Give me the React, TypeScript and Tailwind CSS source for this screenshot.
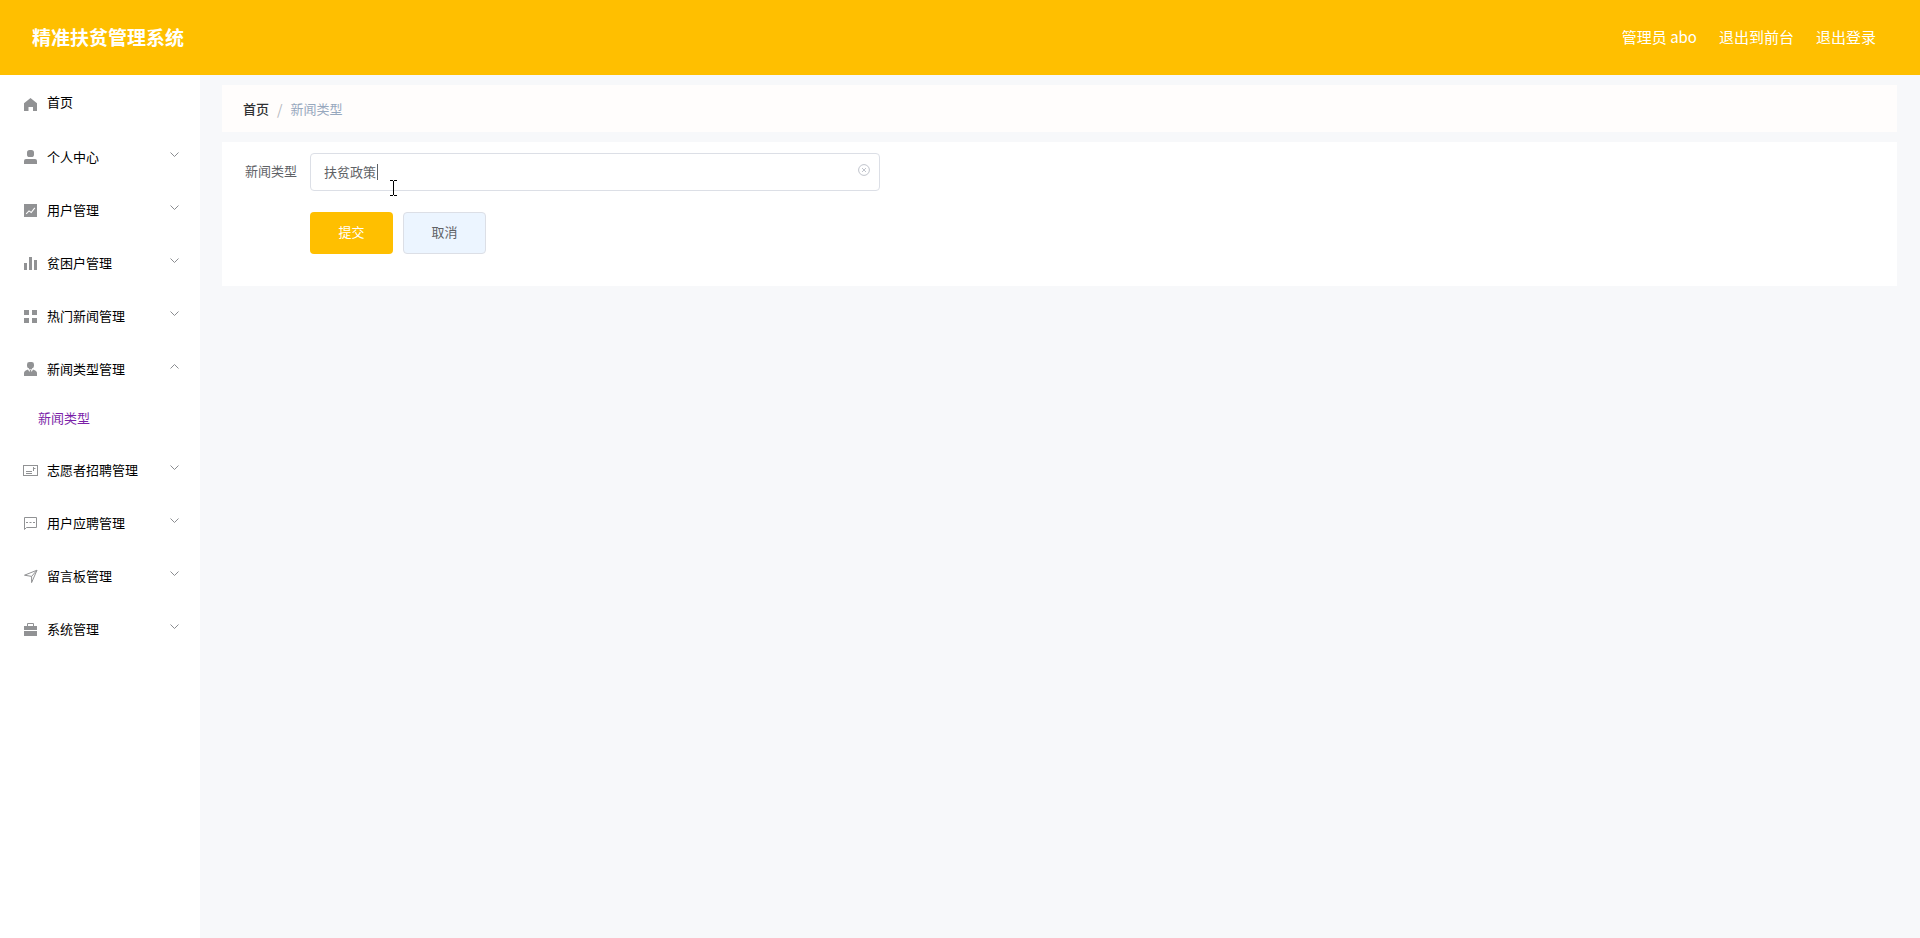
import React, { useState } from 'react';

type IconName =
  | 'home' | 'user' | 'marketing' | 'data' | 'grid' | 'custom'
  | 'postcard' | 'chat' | 'position' | 'cooperation';

interface MenuItem {
  label: string;
  icon: IconName;
  children?: string[];
}

const MENU: MenuItem[] = [
  { label: '个人中心', icon: 'user', children: [] },
  { label: '用户管理', icon: 'marketing', children: [] },
  { label: '贫困户管理', icon: 'data', children: [] },
  { label: '热门新闻管理', icon: 'grid', children: [] },
  { label: '新闻类型管理', icon: 'custom', children: ['新闻类型'] },
  { label: '志愿者招聘管理', icon: 'postcard', children: [] },
  { label: '用户应聘管理', icon: 'chat', children: [] },
  { label: '留言板管理', icon: 'position', children: [] },
  { label: '系统管理', icon: 'cooperation', children: [] },
];

const SHAPES: Record<IconName, React.ReactNode> = {
  home: <path fill="currentColor" d="M7.5 1 14 6.2V14H10V10H5.5V14H1V6.2z" />,
  user: (
    <g fill="currentColor">
      <rect x="4" y="0" width="7" height="7" rx="2.6" />
      <path d="M1 14v-3.2Q1 9 3 9h9q2 0 2 1.8V14z" />
    </g>
  ),
  marketing: (
    <g>
      <rect x="1" y="1" width="13" height="13" fill="currentColor" />
      <path d="M3.2 10.8 6 7.9l2.2 1.6L11.8 4.8" fill="none" stroke="#fff" strokeWidth="1.1" />
    </g>
  ),
  data: (
    <g fill="currentColor">
      <rect x="1" y="7" width="3" height="7" />
      <rect x="6" y="1" width="3" height="13" />
      <rect x="11" y="4" width="3" height="10" />
    </g>
  ),
  grid: (
    <g fill="currentColor">
      <rect x="1" y="1" width="5" height="5" />
      <rect x="9" y="1" width="5" height="5" />
      <rect x="1" y="9" width="5" height="5" />
      <rect x="9" y="9" width="5" height="5" />
    </g>
  ),
  custom: (
    <g fill="currentColor">
      <rect x="4" y="0" width="7" height="6.4" rx="2.4" />
      <path d="M1 14v-3Q1 8.6 5 7.4L6.4 10 7 8h1l.6 2L10 7.4q4 1.2 4 3.6v3z" />
      <path d="M6 5h3v2.4H6z" />
    </g>
  ),
  postcard: (
    <g fill="none" stroke="currentColor">
      <rect x=".5" y="2.5" width="14" height="10" />
      <path d="M3 8.5h6M3 10.5h6M10.5 4v4M10.5 5.5h2" />
    </g>
  ),
  chat: (
    <g fill="none" stroke="currentColor">
      <path d="M1.5 13.5v-12h12v10h-10z" />
      <path d="M3 6.5h2M6.5 6.5h2M10 6.5h2" />
    </g>
  ),
  position: (
    <path d="M1.5 6.2 14 1.2 8.6 13.6V7.4z M8.6 7.4 13.6 1.6" fill="none" stroke="currentColor" />
  ),
  cooperation: (
    <g>
      <path d="M4.5 4V1.5h6V4" fill="none" stroke="currentColor" />
      <path d="M1 4h13v4H1zM1 9h13v5H1z" fill="currentColor" />
    </g>
  ),
};

function Icon({ name }: { name: IconName }) {
  return (
    <svg viewBox="0 0 15 15" className="w-[15px] h-[15px] shrink-0 text-[#919294]" aria-hidden="true">
      {SHAPES[name]}
    </svg>
  );
}

function Chevron({ open }: { open: boolean }) {
  return (
    <svg viewBox="0 0 9 5" className="w-[9px] h-[5px] ml-auto mb-1.5 shrink-0" aria-hidden="true">
      <path d={open ? 'M.5 4.5l4-4 4 4' : 'M.5.5l4 4 4-4'} fill="none" stroke="#8a8c90" />
    </svg>
  );
}

function Header() {
  return (
    <header className="h-[75px] shrink-0 flex items-center justify-between pl-8 pr-11 bg-[#ffbf00] text-white">
      <h1 className="text-[19px] font-bold">精准扶贫管理系统</h1>
      <nav className="flex items-center gap-[22px] text-[15px]">
        <span>管理员 abo</span>
        <a href="#front">退出到前台</a>
        <a href="#logout">退出登录</a>
      </nav>
    </header>
  );
}

function Sidebar() {
  const [opened, setOpened] = useState('新闻类型管理');

  return (
    <aside className="w-[200px] shrink-0 bg-white pt-0.5 text-[13px] text-black">
      <a href="#home" className="flex items-center gap-[9px] h-[54px] pl-[23px] pr-5">
        <Icon name="home" />
        <span className="pb-1">首页</span>
      </a>
      {MENU.map((item) => {
        const open = opened === item.label;
        return (
          <div key={item.label}>
            <button
              type="button"
              aria-expanded={open}
              onClick={() => setOpened(open ? '' : item.label)}
              className="w-full flex items-center gap-[9px] h-[53px] pl-[23px] pr-[21px] cursor-pointer"
            >
              <Icon name={item.icon} />
              <span className="pb-0.5">{item.label}</span>
              <Chevron open={open} />
            </button>
            {open && item.children?.map((child) => (
              <a key={child} href="#type" className="flex items-center h-12 pl-[38px] pb-1 text-[#7b1fa8]">
                {child}
              </a>
            ))}
          </div>
        );
      })}
    </aside>
  );
}

function TypeForm() {
  const [value, setValue] = useState('扶贫政策');

  return (
    <form
      onSubmit={(e) => e.preventDefault()}
      className="mt-2.5 bg-white px-[23px] pt-[11px] pb-8 text-[13px] text-[#606266]"
    >
      <div className="flex items-center">
        <label htmlFor="type" className="w-[65px] shrink-0 pb-0.5">新闻类型</label>
        <div className="relative w-full max-w-[570px]">
          <input
            id="type"
            type="text"
            value={value}
            onChange={(e) => setValue(e.target.value)}
            className="block w-full h-[38px] rounded border border-[#dcdfe6] bg-white pl-[13px] pr-8 pb-0.5 outline-none"
          />
          {/* text caret */}
          <span className="absolute left-[67px] top-[11px] w-px h-4 bg-[#606266]" />
          <button
            type="button"
            aria-label="清空"
            onClick={() => setValue('')}
            className="absolute right-2.5 top-[11px] cursor-pointer"
          >
            <svg viewBox="0 0 12 12" className="w-3 h-3" fill="none" stroke="#c0c4cc" aria-hidden="true">
              <circle cx="6" cy="6" r="5.4" />
              <path d="M4 4l4 4M8 4L4 8" />
            </svg>
          </button>
          {/* mouse pointer */}
          <svg viewBox="0 0 7 16" className="absolute left-20 top-[27px] w-[7px] h-4 pointer-events-none" aria-hidden="true">
            <path d="M0 .5h3M4 .5h3M3.5 1v14M0 15.5h3M4 15.5h3" fill="none" stroke="#000" />
          </svg>
        </div>
      </div>
      <div className="flex gap-2.5 mt-[21px] pl-[65px]">
        <button type="submit" className="w-[83px] h-[42px] pb-0.5 rounded bg-[#ffbf00] text-white cursor-pointer">提交</button>
        <button type="button" className="w-[83px] h-[42px] pb-0.5 rounded border border-[#dcdfe6] bg-[#ecf5ff] cursor-pointer">取消</button>
      </div>
    </form>
  );
}

export default function App() {
  return (
    <div className="min-h-screen flex flex-col bg-[#f7f8fa] font-['Noto_Sans_CJK_SC',sans-serif]">
      <Header />
      <div className="flex flex-1">
        <Sidebar />
        <main className="flex-1 min-w-0 pl-[22px] pr-[23px] pt-2.5">
          <nav aria-label="breadcrumb" className="flex items-center gap-2 h-[47px] px-[21px] bg-[#fffdfc] text-[13px]">
            <a href="#home" className="font-medium text-[#303133]">首页</a>
            <span className="text-sm text-[#b4b7bd]">/</span>
            <span className="text-[#97a8be]">新闻类型</span>
          </nav>
          <TypeForm />
        </main>
      </div>
    </div>
  );
}
